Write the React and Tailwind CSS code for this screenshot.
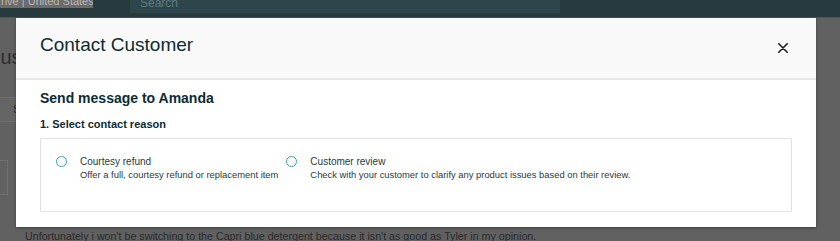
import React from 'react';

const reasons = [
  { id: 'refund', title: 'Courtesy refund', desc: 'Offer a full, courtesy refund or replacement item' },
  { id: 'review', title: 'Customer review', desc: 'Check with your customer to clarify any product issues based on their review.' },
];

const App = () => {
  return (
    <div className="relative h-[241px] w-[840px] overflow-hidden bg-[#616161] font-['Liberation_Sans',Arial,sans-serif]">
      {/* page behind the overlay */}
      <div className="flex h-[17px] items-start bg-[#273a3e]">
        <div className="h-[8px] w-[93px] overflow-hidden bg-[#6b6b6b]">
          <div className="-mt-[6px] pl-[1px] text-[11px] leading-[14px] text-[#b9b9b9] whitespace-nowrap">rive | United States</div>
        </div>
        <div className="ml-[37px] h-[13px] w-[430px] overflow-hidden bg-[#2e464b]">
          <div className="-mt-[5px] pl-[10px] text-[12px] leading-[16px] text-[#5f7b80]">Search</div>
        </div>
      </div>
      <div className="h-px bg-[#525252]" />

      <div className="-ml-[14px] mt-[27px] text-[20px] leading-[24px] text-[#2e2e2e]">Cust</div>
      <div className="mt-[28px] flex h-[25px] w-[17px] items-center border border-l-0 border-[#6e6e6e] bg-[#656565]">
        <span className="ml-[13px] text-[11px] text-[#2e2e2e]">S</span>
      </div>
      <div className="mt-[38px] h-[35px] w-[8px] border border-l-0 border-[#707070]" />
      <div className="mt-[19px] pl-[17px] text-[10.7px] leading-[15px] text-[#2a2a2a] whitespace-nowrap">
        Which was a good thing, though i am not sure that i would buy it again for the price.
      </div>
      <div className="pl-[25px] text-[10.7px] leading-[14px] text-[#2a2a2a] whitespace-nowrap">
        Unfortunately i won't be switching to the Capri blue detergent because it isn't as good as Tyler in my opinion.
      </div>

      {/* modal */}
      <div className="absolute left-[16px] top-[18px] flex h-[209px] w-[800px] flex-col bg-white shadow-[0_1px_3px_rgba(0,0,0,0.35)]">
        <div className="flex h-[62px] items-start justify-between border-b-2 border-[#e6e6e6] bg-[#f9f9f9] pl-[24px] pr-[28px] pt-[13px]">
          <h2 className="text-[19px] leading-[28px] text-[#0d2b31]">Contact Customer</h2>
          <button className="mt-[12px]" aria-label="Close">
            <svg width="10" height="10" viewBox="0 0 10 10">
              <path d="M0.8 0.8 L9.2 9.2 M9.2 0.8 L0.8 9.2" stroke="#1c1c1c" strokeWidth="1.6" strokeLinecap="round" />
            </svg>
          </button>
        </div>

        <div className="px-[24px] pt-[8px]">
          <h3 className="text-[14px] font-bold leading-[20px] text-[#0d2b31]">Send message to Amanda</h3>
          <p className="mt-[8px] text-[11px] font-bold leading-[16px] text-[#0d2b31]">1. Select contact reason</p>

          <div className="mt-[6px] flex h-[74px] items-start gap-[8px] border border-[#e2e2e2] pl-[15px] pt-[16px]">
            {reasons.map((r) => (
              <label key={r.id} className="flex items-start gap-[13px]">
                <span className="mt-[1px] h-[11px] w-[11px] shrink-0 rounded-full border-[1.5px] border-[#3a9fb3]" />
                <span className="flex flex-col text-[#1f3a40]">
                  <span className="text-[10px] leading-[13px]">{r.title}</span>
                  <span className="text-[9.4px] leading-[13px] whitespace-nowrap">{r.desc}</span>
                </span>
              </label>
            ))}
          </div>
        </div>
      </div>
    </div>
  );
};

export default App;
